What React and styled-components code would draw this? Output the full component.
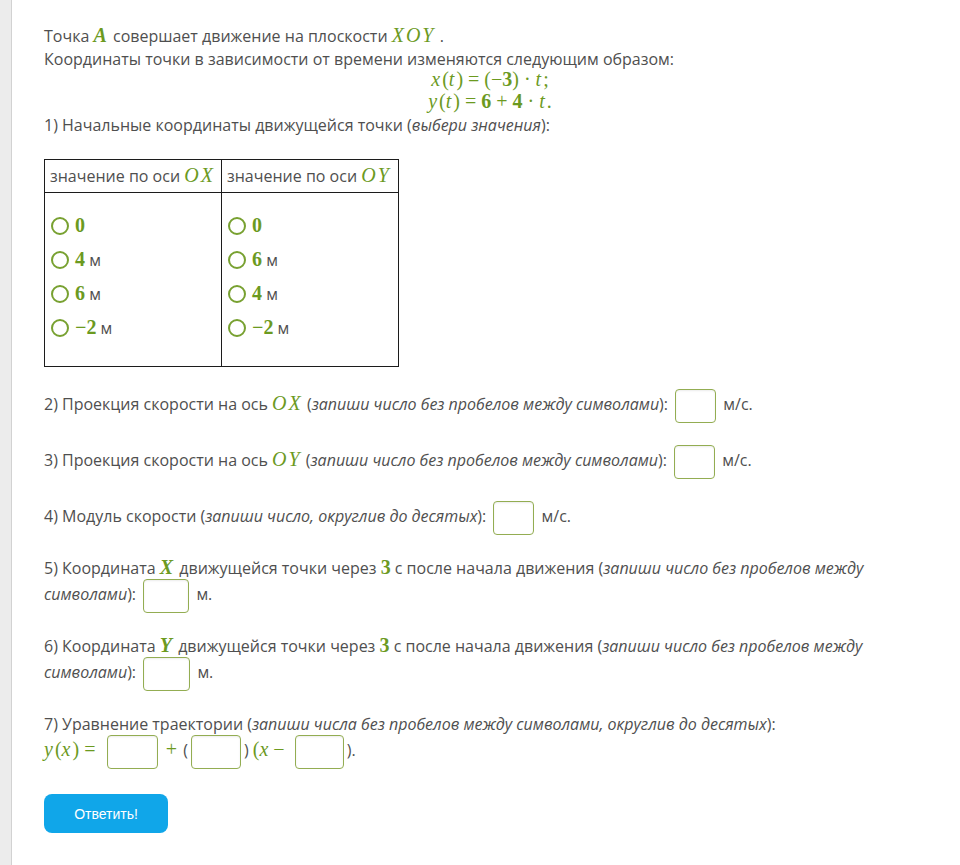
import React from 'react';
import styled, { createGlobalStyle } from 'styled-components';

const GlobalStyle = createGlobalStyle`
  html, body {
    margin: 0;
    padding: 0;
    background: #fff;
  }
  body {
    font-family: "Open Sans", "DejaVu Sans", sans-serif;
    font-size: 16px;
    line-height: 22px;
    color: #4f4f4f;
  }
`;

const GREEN = '#6c9a1f';

const colX = [
  { value: '0' },
  { value: '4', unit: true },
  { value: '6', unit: true },
  { value: '−2', unit: true },
];

const colY = [
  { value: '0' },
  { value: '6', unit: true },
  { value: '4', unit: true },
  { value: '−2', unit: true },
];

export default function App() {
  return (
    <>
      <GlobalStyle />
      <Page>
        <SideStrip />
        <Content>
          <Line>
            Точка <M bold wide>A</M> совершает движение на плоскости <M wide>XOY</M> .
          </Line>
          <Line>Координаты точки в зависимости от времени изменяются следующим образом:</Line>
          <Formula>
            <div><M wide>x</M><M up>(</M><M wide>t</M><M up>) = (−</M><M up bold>3</M><M up>) · </M><M wide>t</M><M up>;</M></div>
            <div><M wide>y</M><M up>(</M><M wide>t</M><M up>) = </M><M up bold>6</M><M up> + </M><M up bold>4</M><M up> · </M><M wide>t</M><M up>.</M></div>
          </Formula>
          <Line>
            1) Начальные координаты движущейся точки (<i>выбери значения</i>):
          </Line>

          <Table>
            <thead>
              <tr>
                <HeadCell>значение по оси <M wide>OX</M></HeadCell>
                <HeadCell>значение по оси <M wide>OY</M></HeadCell>
              </tr>
            </thead>
            <tbody>
              <tr>
                {[colX, colY].map((col, i) => (
                  <BodyCell key={i}>
                    {col.map((o, j) => (
                      <Option key={j}>
                        <Radio />
                        <span>
                          <M up bold>{o.value}</M>
                          {o.unit && ' м'}
                        </span>
                      </Option>
                    ))}
                  </BodyCell>
                ))}
              </tr>
            </tbody>
          </Table>

          <Question>
            2) Проекция скорости на ось <M wide>OX</M> (<i>запиши число без пробелов между символами</i>): <Box w={41} /> м/с.
          </Question>
          <Question>
            3) Проекция скорости на ось <M wide>OY</M> (<i>запиши число без пробелов между символами</i>): <Box w={41} /> м/с.
          </Question>
          <Question>
            4) Модуль скорости (<i>запиши число, округлив до десятых</i>): <Box w={41} /> м/с.
          </Question>
          <Question>
            5) Координата <M bold wide>X</M> движущейся точки через <M up bold>3</M> с после начала движения (<i>запиши число без пробелов между символами</i>): <Box w={46} /> м.
          </Question>
          <Question>
            6) Координата <M bold wide>Y</M> движущейся точки через <M up bold>3</M> с после начала движения (<i>запиши число без пробелов между символами</i>): <Box w={47} /> м.
          </Question>
          <Question>
            7) Уравнение траектории (<i>запиши числа без пробелов между символами, округлив до десятых</i>):
            <br />
            <M wide>y</M><M up>(</M><M wide>x</M><M up>)</M><Op l={5} r={4}>=</Op> <Box w={51} /> <Op l={1} r={2}>+</Op> (<Box w={50} />) <M up>(</M><M wide>x</M><Op l={3} r={3}>−</Op> <Box w={49} />).
          </Question>

          <SubmitButton type="button">Ответить!</SubmitButton>
        </Content>
      </Page>
    </>
  );
}

const Page = styled.div`
  display: flex;
  min-height: 865px;
`;

const SideStrip = styled.div`
  flex: 0 0 11px;
  background: #ececec;
  border-right: 1px solid #d2d2d2;
`;

const Content = styled.main`
  width: 892px;
  padding: 25px 24px 30px 32px;
`;

const Line = styled.div`
  min-height: 23px;
  line-height: 23px;
`;

const Formula = styled.div`
  text-align: center;
  line-height: 22px;
  margin: -2px 0 1px;
`;

const M = styled.span`
  font-family: "Liberation Serif", "DejaVu Serif", serif;
  font-size: 20px;
  font-style: ${p => (p.up ? 'normal' : 'italic')};
  font-weight: ${p => (p.bold ? 700 : 400)};
  letter-spacing: ${p => (p.wide ? '2px' : '0')};
  color: ${GREEN};
  line-height: 1;
  white-space: pre;
`;

const Op = styled.span`
  font-family: "Liberation Serif", "DejaVu Serif", serif;
  font-size: 20px;
  color: ${GREEN};
  line-height: 1;
  padding: 0 ${p => p.r}px 0 ${p => p.l}px;
`;

const Table = styled.table`
  border-collapse: collapse;
  margin-top: 22px;
`;

const HeadCell = styled.th`
  border: 1px solid #1c1c1c;
  height: 32px;
  width: 166px;
  padding: 0 5px;
  font-weight: 400;
  text-align: left;
  vertical-align: middle;
  white-space: nowrap;
`;

const BodyCell = styled.td`
  border: 1px solid #1c1c1c;
  padding: 16px 5px 21px 6px;
  vertical-align: top;
`;

const Option = styled.div`
  display: flex;
  align-items: center;
  gap: 6px;
  height: 34px;
`;

const Radio = styled.span`
  box-sizing: border-box;
  width: 18px;
  height: 18px;
  border: 2px solid #78a131;
  border-radius: 50%;
  flex: none;
`;

const Question = styled.p`
  margin: 22px 0 0;
  line-height: 22px;
`;

const Box = styled.input.attrs({ type: 'text' })`
  box-sizing: border-box;
  width: ${p => p.w}px;
  height: 34px;
  margin: 0 3px;
  padding: 0 4px;
  vertical-align: middle;
  border: 1px solid #93ad52;
  border-radius: 4px;
  background: #fff;
  box-shadow: inset 0 1px 2px rgba(0, 0, 0, 0.08);
  font: inherit;
`;

const SubmitButton = styled.button`
  display: block;
  margin-top: 25px;
  width: 124px;
  height: 39px;
  border: none;
  border-radius: 8px;
  background: #10a6e9;
  color: #fff;
  font-family: "Liberation Sans", Arial, sans-serif;
  font-size: 14px;
  cursor: pointer;
`;
